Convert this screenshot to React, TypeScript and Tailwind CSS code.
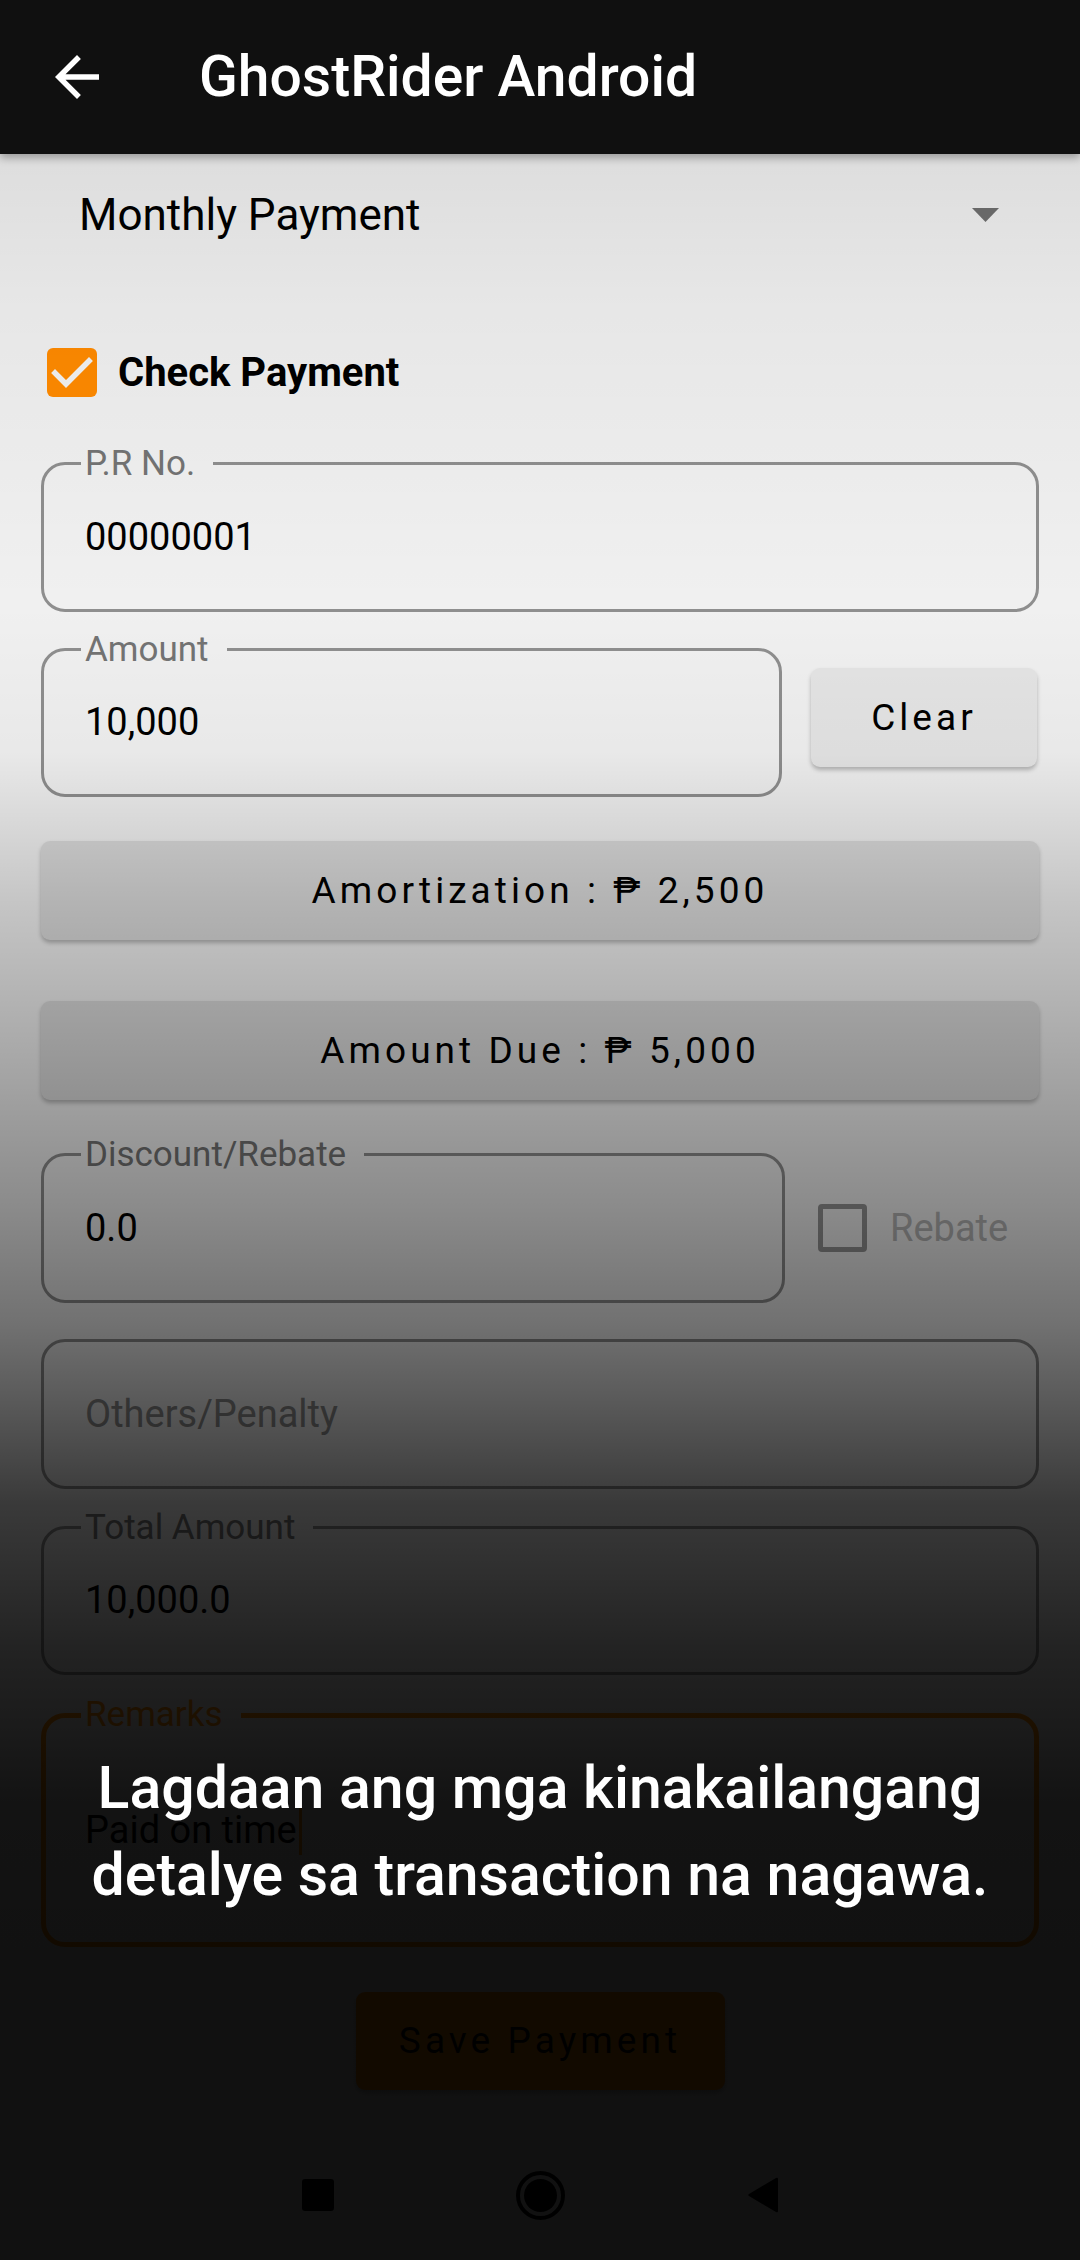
import React from "react";

type FieldProps = {
  label?: string;
  value?: string;
  placeholder?: string;
  className?: string;
  focused?: boolean;
};

function OutlinedField({ label, value, placeholder, className = "", focused = false }: FieldProps) {
  return (
    <div
      className={`relative flex items-center rounded-[24px] ${
        focused ? "border-[5px] border-[#ff8c00]" : "border-[3px] border-[#8e8e8e]"
      } ${className}`}
    >
      {label && (
        <span
          className={`absolute bg-[#f0f0f0] pl-[4px] pr-[18px] text-[35px] leading-[35px] ${
            focused ? "left-[35px] top-[-21px] text-[#ff8c00]" : "left-[37px] top-[-19px] text-[#737373]"
          }`}
        >
          {label}
        </span>
      )}
      <div className={`${focused ? "pl-[39px]" : "pl-[41px]"} flex items-center text-[38px]`}>
        {value ? (
          <span className="text-black">{value}</span>
        ) : (
          <span className="text-[#8a8a8a]">{placeholder}</span>
        )}
        {focused && <span className="ml-[2px] inline-block h-[50px] w-[3px] bg-[#ff8c00]" />}
      </div>
    </div>
  );
}

function GrayButton({ children, className = "" }: { children: React.ReactNode; className?: string }) {
  return (
    <div
      className={`flex items-center justify-center rounded-[9px] text-[37px] tracking-[0.11em] text-black shadow-[0_3px_4px_rgba(0,0,0,0.25)] ${className}`}
    >
      {children}
    </div>
  );
}

export default function App() {
  return (
    <div className="relative h-[2260px] w-[1080px] overflow-hidden bg-[#f0f0f0] font-['Roboto',sans-serif]">
      <header className="relative z-10 flex h-[154px] items-center bg-[#101010] pl-[44px] shadow-[0_4px_8px_rgba(0,0,0,0.3)]">
        <svg width="66" height="66" viewBox="0 0 24 24" fill="white">
          <path d="M20 11H7.83l5.59-5.59L12 4l-8 8 8 8 1.41-1.41L7.83 13H20v-2z" />
        </svg>
        <h1 className="ml-[89px] text-[57px] font-medium text-white">GhostRider Android</h1>
      </header>

      <main className="px-[41px]">
        {/* spinner */}
        <div className="flex h-[122px] items-center justify-between pl-[38px] pr-[40px]">
          <span className="text-[44px] text-black">Monthly Payment</span>
          <svg width="27" height="14" viewBox="0 0 27 14">
            <polygon points="0,0 27,0 13.5,14" fill="#6f6f6f" />
          </svg>
        </div>

        {/* check payment */}
        <div className="mt-[72px] flex h-[49px] items-center pl-[6px]">
          <div className="flex h-[49px] w-[50px] items-center justify-center rounded-[6px] bg-[#ff8a00]">
            <svg width="50" height="49" viewBox="0 0 50 49">
              <polyline
                points="8,25 19,36 42,13"
                fill="none"
                stroke="#f2f2f2"
                strokeWidth="5.5"
                strokeLinecap="square"
              />
            </svg>
          </div>
          <span className="ml-[21px] text-[40px] font-bold text-black">Check Payment</span>
        </div>

        <OutlinedField label="P.R No." value="00000001" className="mt-[65px] h-[150px]" />

        <div className="mt-[36px] flex items-start">
          <OutlinedField label="Amount" value="10,000" className="h-[149px] w-[741px]" />
          <GrayButton className="ml-[29px] mt-[20px] h-[99px] w-[226px] bg-[#e4e4e4]">Clear</GrayButton>
        </div>

        <GrayButton className="mt-[44px] h-[99px] bg-[#dadada]">Amortization : ₱ 2,500</GrayButton>
        <GrayButton className="mt-[61px] h-[99px] bg-[#dadada]">Amount Due : ₱ 5,000</GrayButton>

        <div className="mt-[53px] flex items-center">
          <OutlinedField label="Discount/Rebate" value="0.0" className="h-[150px] w-[744px]" />
          <div className="ml-[33px] flex items-center">
            <div className="h-[48px] w-[49px] rounded-[4px] border-[5px] border-[#939393]" />
            <span className="ml-[23px] text-[38px] text-[#b3b3b3]">Rebate</span>
          </div>
        </div>

        <OutlinedField placeholder="Others/Penalty" className="mt-[36px] h-[150px]" />
        <OutlinedField label="Total Amount" value="10,000.0" className="mt-[37px] h-[149px]" />
        <OutlinedField label="Remarks" value="Paid on time" focused className="mt-[38px] h-[234px]" />

        <GrayButton className="mx-auto mt-[45px] h-[98px] w-[369px] bg-[#ff8c00]">Save Payment</GrayButton>
      </main>

      {/* system nav */}
      <nav className="mt-[40px] flex h-[130px] items-center justify-center gap-[182px]">
        <div className="h-[32px] w-[32px] rounded-[3px] bg-black" />
        <div className="flex h-[49px] w-[49px] items-center justify-center rounded-full border-[4px] border-black">
          <div className="h-[33px] w-[33px] rounded-full bg-black" />
        </div>
        <svg width="31" height="36" viewBox="0 0 31 36">
          <path d="M29 1 L2 17 Q0.5 18 2 19 L29 35 Q31 36 31 34 L31 2 Q31 0 29 1 Z" fill="black" />
        </svg>
      </nav>

      {/* tutorial dim overlay */}
      <div className="pointer-events-none absolute inset-x-0 bottom-0 top-[154px] z-20 bg-[linear-gradient(to_bottom,rgba(0,0,0,0.08)_0px,rgba(0,0,0,0.04)_150px,rgba(0,0,0,0)_450px,rgba(0,0,0,0.03)_600px,rgba(0,0,0,0.18)_750px,rgba(0,0,0,0.26)_850px,rgba(0,0,0,0.42)_1050px,rgba(0,0,0,0.53)_1170px,rgba(0,0,0,0.63)_1250px,rgba(0,0,0,0.76)_1350px,rgba(0,0,0,0.86)_1500px,rgba(0,0,0,0.92)_1650px,rgba(0,0,0,0.93)_1800px)]" />

      <p className="absolute inset-x-0 top-[1744px] z-30 text-center text-[59px] font-medium leading-[87px] text-white">
        Lagdaan ang mga kinakailangang
        <br />
        detalye sa transaction na nagawa.
      </p>
    </div>
  );
}
